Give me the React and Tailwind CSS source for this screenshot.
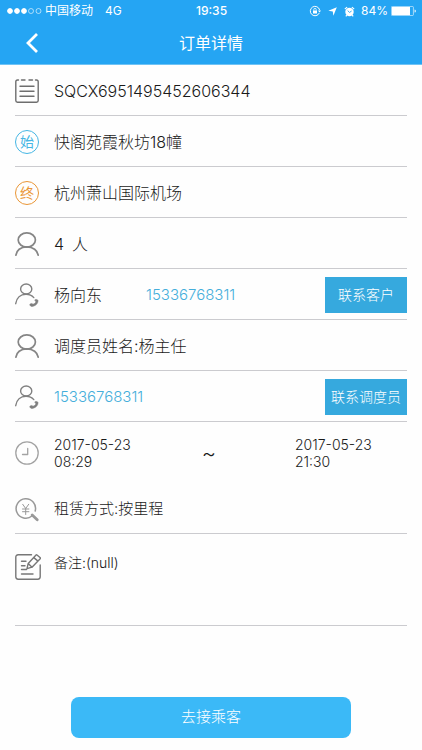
const order = {
  id: 'SQCX6951495452606344',
  from: '快阁苑霞秋坊18幢',
  to: '杭州萧山国际机场',
  passengers: 4,
  customer: { name: '杨向东', phone: '15336768311' },
  dispatcher: { name: '杨主任', phone: '15336768311' },
  start: { date: '2017-05-23', time: '08:29' },
  end: { date: '2017-05-23', time: '21:30' },
  rental: '按里程',
  remark: '(null)',
}

const iconProps = {
  viewBox: '0 0 24 24',
  fill: 'none',
  stroke: 'currentColor',
  strokeLinecap: 'round',
  strokeLinejoin: 'round',
  'aria-hidden': true,
}

function OrderIcon() {
  return (
    <svg {...iconProps} strokeWidth="1.4" className="size-6 text-[#6e6e6e]">
      <path d="M3.5 1H2.5Q.8 1 .8 2.7V21.500Q.8 23.200 2.500 23.200H21.500Q23.200 23.200 23.200 21.500V2.700Q23.200 1 21.500 1H20.500M6.500 1H10M14 1H17.500" />
      <path d="M5 7.200h14M5 12.200h14M5 17.200h14" />
    </svg>
  )
}

function Badge({ label, className }) {
  return (
    <span className={`flex size-6 items-center justify-center rounded-full border text-[14px] leading-none font-normal ${className}`}>
      {label}
    </span>
  )
}

function PersonIcon() {
  return (
    <svg {...iconProps} strokeWidth="1.7" className="size-6 text-[#858585]">
      <ellipse cx="11.8" cy="8" rx="8.6" ry="7.1" />
      <path d="M.9 23.200C1.400 18.500 5.500 14.900 11.800 14.900S22.500 18.500 23.200 23.200" />
    </svg>
  )
}

function ContactIcon() {
  return (
    <svg {...iconProps} strokeWidth="1.4" className="size-6 text-[#808080]">
      <ellipse cx="11.2" cy="6" rx="5.600" ry="5" />
      <path d="M.7 20.700C1.500 15 5.500 11.300 11 11.300c3.200 0 6 1.200 7.800 3.300" />
      <path
        d="M20.200 16.600c1-.5 2.400-.1 2.800.8.3 3.300-2.900 6-6.600 6-1.100-.1-1.900-1.400-1.500-2.300l1.900-.7 1.200.8c1.500-.4 2.400-1.200 2.900-2.400l-.9-1.100z"
        fill="currentColor"
        strokeWidth=".5"
      />
    </svg>
  )
}

function ClockIcon() {
  return (
    <svg {...iconProps} strokeWidth="1.3" className="size-6 text-[#a3a3a3]">
      <circle cx="12" cy="12" r="11.2" />
      <path d="M12.700 7.500v6H7.500" />
    </svg>
  )
}

function RentalIcon() {
  return (
    <svg {...iconProps} strokeWidth="1.5" className="size-6 text-[#999999]">
      <path d="M17.200 17.800A9.700 9.700 0 1 1 20.200 13" />
      <path d="M17.200 17l5 4.800" strokeWidth="2.800" />
      <path d="M7.700 6.300l3 4.200 3-4.200M10.700 10.500v6M7.500 11h6.400M7.500 13.700h6.400" strokeWidth="1" />
    </svg>
  )
}

function RemarkIcon() {
  return (
    <svg {...iconProps} viewBox="0 0 26 26" strokeWidth="1.4" className="size-[26px] shrink-0 text-[#777777]">
      <path d="M16.500.8H3.200Q.8.8.8 3.200v19.600q0 2.400 2.400 2.400h19.600q2.400 0 2.400-2.400V11" />
      <path d="M22 1l3 2.500q.6.600.2 1.200L17 13.200l-5 1.500 1.200-5.300L20.800 1.200q.6-.6 1.200-.2zM18.800 3.600l4.200 3.500M13.200 9.400l3.800 3.800" />
      <path d="M6.500 7.200h4.500M6.500 11.700h3.500M6.500 15.500h5M6.500 20h11.500" />
    </svg>
  )
}

function StatusBar() {
  return (
    <div className="grid h-[22px] grid-cols-[1fr_auto_1fr] items-center pr-1.5 pl-[7px] text-[12px] font-normal">
      <div className="flex items-center">
        <svg viewBox="0 0 35 6" className="mr-[3px] h-1.5 w-[35px]" fill="white" stroke="white" aria-hidden="true">
          <circle cx="3" cy="3" r="2.400" />
          <circle cx="10" cy="3" r="2.400" />
          <circle cx="17" cy="3" r="2.400" />
          <g fill="none" strokeWidth=".6">
            <circle cx="24" cy="3" r="2.500" />
            <circle cx="31.500" cy="3" r="2.500" />
          </g>
        </svg>
        <span>中国移动</span>
        <span className="ml-3">4G</span>
      </div>
      <span className="font-medium">19:35</span>
      <div className="flex items-center justify-end">
        <svg viewBox="0 0 12 12" className="mr-[7px] size-3" fill="none" stroke="white" aria-hidden="true">
          <path d="M10.300 8A4.700 4.700 0 1 1 10.600 5" />
          <path d="M9 5.500h3L10.600 7.500z" fill="white" stroke="none" />
          <path d="M4 5.500h4v3H4z" fill="white" stroke="none" />
          <path d="M4.800 5.500V4.600a1.200 1.200 0 0 1 2.400 0v.9" strokeWidth=".8" />
        </svg>
        <svg viewBox="0 0 10 10" className="mr-[7px] size-[9px]" fill="white" aria-hidden="true">
          <path d="M9.800.2L6 9.600 5.300 4.900.4 4.200z" />
        </svg>
        <svg viewBox="0 0 12 12" className="mr-1.5 size-[11px]" fill="none" stroke="white" aria-hidden="true">
          <circle cx="6" cy="6.500" r="4.600" fill="white" stroke="none" />
          <path d="M.9 3.400L3.400 1.200M11.100 3.400L8.600 1.200M3 10l-1 1.300M9 10l1 1.300" strokeWidth="1.300" />
          <path d="M4 5l2 2 2.300-1.500" stroke="#25a5f3" />
        </svg>
        <span className="mr-[3px]">84%</span>
        <svg viewBox="0 0 25 10" className="h-2.5 w-[25px]" aria-hidden="true">
          <rect x=".4" y=".4" width="22" height="9.200" rx="1" fill="none" stroke="white" strokeWidth=".6" />
          <rect x="1" y="1" width="18" height="8" fill="white" />
          <path d="M23.600 3.400q1.200.1 1.200 1.600t-1.200 1.600z" fill="white" />
        </svg>
      </div>
    </div>
  )
}

function Row({ icon, children, className = 'h-[51px] border-b items-center pt-0.5' }) {
  return (
    <div className={`flex gap-[15px] border-[#cbcbcf] ${className}`}>
      <div className="flex w-6 shrink-0 items-center">{icon}</div>
      {children}
    </div>
  )
}

function ContactButton({ children }) {
  return (
    <button type="button" className="ml-auto h-9 w-[82px] shrink-0 bg-[#36a9de] pb-0.5 text-[14px] whitespace-nowrap text-white">
      {children}
    </button>
  )
}

function Phone({ number }) {
  return (
    <a href={`tel:${number}`} className="text-[15px] text-[#45aedb]">
      {number}
    </a>
  )
}

function DateTime({ value, className = '' }) {
  return (
    <div className={`text-[14px] leading-[17px] ${className}`}>
      <p>{value.date}</p>
      <p>{value.time}</p>
    </div>
  )
}

export default function App() {
  return (
    <div className="flex min-h-screen flex-col bg-[#fefefe] font-['Inter','Noto_Sans_CJK_SC',sans-serif] text-[16px] font-light text-[#1a1a1a]">
      <header className="border-b border-[#6fc3f5] bg-[#25a5f3] text-white">
        <StatusBar />
        <div className="grid h-[42px] grid-cols-[1fr_auto_1fr] items-center">
          <button type="button" aria-label="返回" className="ml-[26px] w-3">
            <svg viewBox="0 0 12 20" className="h-5 w-3" fill="none" stroke="white" strokeWidth="2.8" aria-hidden="true">
              <path d="M11 1L2 10l9 9" />
            </svg>
          </button>
          <h1 className="text-[16px] font-normal">订单详情</h1>
        </div>
      </header>

      <main className="px-[15px]">
        <Row icon={<OrderIcon />}>{order.id}</Row>
        <Row icon={<Badge label="始" className="border-[#45b6e4] text-[#45b6e4]" />}>{order.from}</Row>
        <Row icon={<Badge label="终" className="border-[#ea9636] text-[#ea9636]" />}>{order.to}</Row>
        <Row icon={<PersonIcon />}>
          <p className="flex gap-2">
            <span>{order.passengers}</span>
            <span>人</span>
          </p>
        </Row>
        <Row icon={<ContactIcon />}>
          <span className="w-[77px]">{order.customer.name}</span>
          <Phone number={order.customer.phone} />
          <ContactButton>联系客户</ContactButton>
        </Row>
        <Row icon={<PersonIcon />}>调度员姓名:{order.dispatcher.name}</Row>
        <Row icon={<ContactIcon />}>
          <Phone number={order.dispatcher.phone} />
          <ContactButton>联系调度员</ContactButton>
        </Row>
        <Row icon={<ClockIcon />} className="h-[62px] items-center">
          <DateTime value={order.start} />
          <span className="flex-1 pr-2 text-center text-[22px]">~</span>
          <DateTime value={order.end} className="w-28" />
        </Row>
        <Row icon={<RentalIcon />} className="h-[50px] items-center border-b pt-0.5 text-[15px]">
          租赁方式:{order.rental}
        </Row>
        <Row icon={<RemarkIcon />} className="h-[92px] items-start border-b pt-5 text-[14px]">
          <p className="leading-[18px]">备注:{order.remark}</p>
        </Row>
      </main>

      <footer className="px-[71px] pt-[71px] pb-2">
        <button type="button" className="h-[41px] w-full rounded-lg bg-[#3bb9f7] text-[15px] text-white">
          去接乘客
        </button>
      </footer>
    </div>
  )
}
